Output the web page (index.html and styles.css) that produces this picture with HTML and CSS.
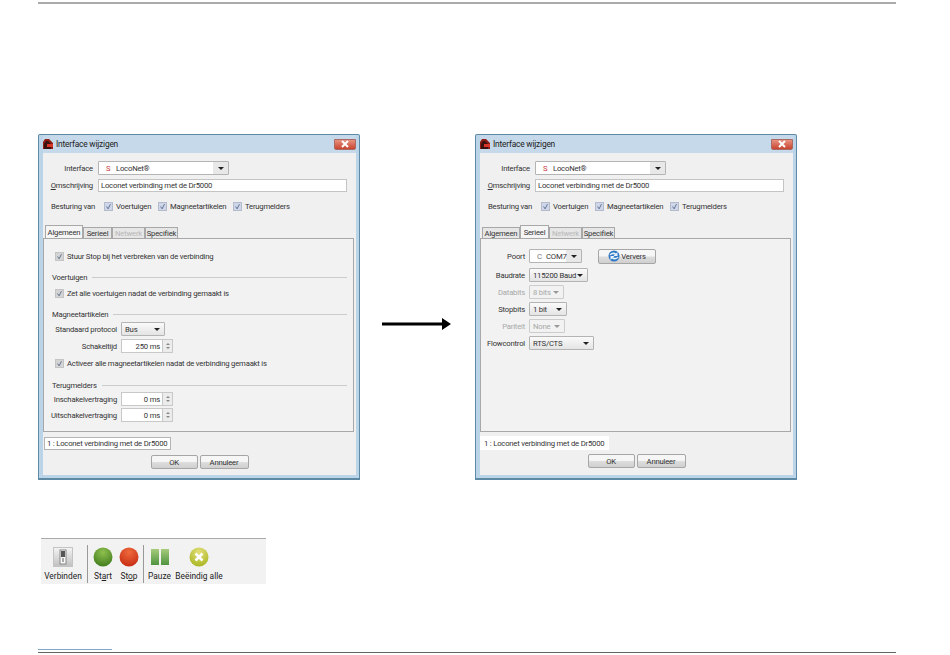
FILE: index.html
```html
<!DOCTYPE html>
<html lang="nl">
<head>
    <meta charset="UTF-8">
    <title>Interface wijzigen</title>
    <link rel="stylesheet" href="styles.css">
</head>
<body>
    <svg class="defs" width="0" height="0">
        <symbol id="loco" viewBox="0 0 12 12">
            <path d="M1 11V4l2-3h4l4 4v6z" fill="#8f1d14"/>
            <path d="M2 11V6l2-3h2l3 3v5z" fill="#3a1210"/>
            <path d="M5 6h6v3H5z" fill="#d8362a"/>
        </symbol>
        <symbol id="x" viewBox="0 0 10 8">
            <path d="M2 1l6 6M8 1L2 7" stroke="#fff" stroke-width="2"/>
        </symbol>
        <symbol id="check" viewBox="0 0 9 9">
            <path d="M2 4.500l2 3 3-6" fill="none" stroke="#5b6f8c" stroke-width="1.200"/>
        </symbol>
    </svg>

    <div class="page">
        <div class="rule-top"></div>

        <div class="dialogs">
            <div class="dialog">
                <div class="titlebar">
                    <svg class="app-icon"><use href="#loco"/></svg>
                    <span class="title">Interface wijzigen</span>
                    <span class="close"><svg class="close-x"><use href="#x"/></svg></span>
                </div>
                <div class="body">
                    <div class="top-row">
                        <label class="top-label">Interface</label>
                        <div class="combo combo-interface"><span class="mark">S</span><span>LocoNet®</span><i class="caret"></i></div>
                    </div>
                    <div class="top-row top-row-desc">
                        <label class="top-label"><u>O</u>mschrijving</label>
                        <div class="textfield">Loconet verbinding met de Dr5000</div>
                    </div>
                    <div class="control-row">
                        <span class="control-label">Besturing van</span>
                        <span class="check check-blue"><svg><use href="#check"/></svg>Voertuigen</span>
                        <span class="check check-blue"><svg><use href="#check"/></svg>Magneetartikelen</span>
                        <span class="check check-blue"><svg><use href="#check"/></svg>Terugmelders</span>
                    </div>
                    <div class="tabs">
                        <span class="tab tab-1 active">Algemeen</span>
                        <span class="tab tab-2">Serieel</span>
                        <span class="tab tab-3 disabled">Netwerk</span>
                        <span class="tab tab-4">Specifiek</span>
                    </div>
                    <div class="panel panel-general">
                        <span class="check check-grey first"><svg><use href="#check"/></svg>Stuur Stop bij het verbreken van de verbinding</span>
                        <div class="section section-1"><span>Voertuigen</span><hr></div>
                        <span class="check check-grey"><svg><use href="#check"/></svg>Zet alle voertuigen nadat de verbinding gemaakt is</span>
                        <div class="section section-2"><span>Magneetartikelen</span><hr></div>
                        <div class="form-row">
                            <label>Standaard protocol</label>
                            <div class="combo combo-bus">Bus<i class="caret"></i></div>
                        </div>
                        <div class="form-row">
                            <label>Schakeltijd</label>
                            <div class="spinner">250 ms<span class="spin-btns"><i class="up"></i><i class="down"></i></span></div>
                        </div>
                        <span class="check check-grey activate"><svg><use href="#check"/></svg>Activeer alle magneetartikelen nadat de verbinding gemaakt is</span>
                        <div class="section section-3"><span>Terugmelders</span><hr></div>
                        <div class="form-row">
                            <label>Inschakelvertraging</label>
                            <div class="spinner">0 ms<span class="spin-btns"><i class="up"></i><i class="down"></i></span></div>
                        </div>
                        <div class="form-row form-row-wide">
                            <label>Uitschakelvertraging</label>
                            <div class="spinner">0 ms<span class="spin-btns"><i class="up"></i><i class="down"></i></span></div>
                        </div>
                    </div>
                    <div class="status-tab boxed">1 : Loconet verbinding met de Dr5000</div>
                    <div class="buttons">
                        <button class="btn btn-ok">OK</button>
                        <button class="btn btn-cancel">Annuleer</button>
                    </div>
                </div>
            </div>

            <div class="arrow">
                <svg width="69" height="12" viewBox="0 0 69 12"><path d="M0 4.500h60V0l9 6-9 6V7.500H0z" fill="#000"/></svg>
            </div>

            <div class="dialog">
                <div class="titlebar">
                    <svg class="app-icon"><use href="#loco"/></svg>
                    <span class="title">Interface wijzigen</span>
                    <span class="close"><svg class="close-x"><use href="#x"/></svg></span>
                </div>
                <div class="body">
                    <div class="top-row">
                        <label class="top-label">Interface</label>
                        <div class="combo combo-interface"><span class="mark">S</span><span>LocoNet®</span><i class="caret"></i></div>
                    </div>
                    <div class="top-row top-row-desc">
                        <label class="top-label"><u>O</u>mschrijving</label>
                        <div class="textfield">Loconet verbinding met de Dr5000</div>
                    </div>
                    <div class="control-row">
                        <span class="control-label">Besturing van</span>
                        <span class="check check-blue"><svg><use href="#check"/></svg>Voertuigen</span>
                        <span class="check check-blue"><svg><use href="#check"/></svg>Magneetartikelen</span>
                        <span class="check check-blue"><svg><use href="#check"/></svg>Terugmelders</span>
                    </div>
                    <div class="tabs">
                        <span class="tab tab-1">Algemeen</span>
                        <span class="tab tab-2 active">Serieel</span>
                        <span class="tab tab-3 disabled">Netwerk</span>
                        <span class="tab tab-4">Specifiek</span>
                    </div>
                    <div class="panel panel-serial">
                        <div class="serial-row serial-port">
                            <label>Poort</label>
                            <div class="combo combo-port"><span class="mark-grey">C</span><span>COM7</span><i class="caret"></i></div>
                            <button class="btn btn-refresh">
                                <svg width="12" height="12" viewBox="0 0 12 12">
                                    <circle cx="6" cy="6" r="5.500" fill="#2f78c4"/>
                                    <path d="M1.500 5C2.500 2.500 6 1.800 8 3.500L9.500 2v4H5.500l1.300-1.400C5.300 3.800 3.500 4 2.600 5.300zM10.500 7C9.500 9.500 6 10.200 4 8.500L2.500 10V6h4L5.200 7.400c1.500.8 3.300.6 4.200-.7z" fill="#e8f2fb"/>
                                </svg>
                                Ververs
                            </button>
                        </div>
                        <div class="serial-row">
                            <label>Baudrate</label>
                            <div class="combo combo-baud">115200 Baud<i class="caret"></i></div>
                        </div>
                        <div class="serial-row off">
                            <label>Databits</label>
                            <div class="combo combo-data">8 bits<i class="caret"></i></div>
                        </div>
                        <div class="serial-row">
                            <label>Stopbits</label>
                            <div class="combo combo-stop">1 bit<i class="caret"></i></div>
                        </div>
                        <div class="serial-row off">
                            <label>Pariteit</label>
                            <div class="combo combo-parity">None<i class="caret"></i></div>
                        </div>
                        <div class="serial-row">
                            <label>Flowcontrol</label>
                            <div class="combo combo-flow">RTS/CTS<i class="caret"></i></div>
                        </div>
                    </div>
                    <div class="status-tab">1 : Loconet verbinding met de Dr5000</div>
                    <div class="buttons">
                        <button class="btn btn-ok">OK</button>
                        <button class="btn btn-cancel">Annuleer</button>
                    </div>
                </div>
            </div>
        </div>

        <div class="toolbar">
            <div class="tool tool-connect">
                <svg width="20" height="20" viewBox="0 0 20 20">
                    <defs>
                        <linearGradient id="sw" x1="0" y1="0" x2="0" y2="1">
                            <stop offset="0" stop-color="#f4f4f4"/>
                            <stop offset="1" stop-color="#c0c0c0"/>
                        </linearGradient>
                    </defs>
                    <rect x="0.500" y="0.500" width="19" height="19" fill="url(#sw)" stroke="#c4c4c4"/>
                    <rect x="7" y="3" width="6" height="14" fill="#f8f8f8" stroke="#888"/>
                    <rect x="8" y="4" width="4" height="6" fill="#555"/>
                    <rect x="9" y="11" width="2" height="4" fill="#aaa"/>
                </svg>
                <span>Verbinden</span>
            </div>
            <div class="tool-sep"></div>
            <div class="tool tool-start">
                <svg width="20" height="20" viewBox="0 0 20 20">
                    <defs>
                        <radialGradient id="green" cx="0.500" cy="0.250" r="0.800">
                            <stop offset="0" stop-color="#8fc04f"/>
                            <stop offset="1" stop-color="#3e7a1c"/>
                        </radialGradient>
                    </defs>
                    <circle cx="10" cy="10" r="9.500" fill="url(#green)"/>
                </svg>
                <span>St<u>a</u>rt</span>
            </div>
            <div class="tool tool-stop">
                <svg width="20" height="20" viewBox="0 0 20 20">
                    <defs>
                        <radialGradient id="red" cx="0.500" cy="0.250" r="0.800">
                            <stop offset="0" stop-color="#ee6a3c"/>
                            <stop offset="1" stop-color="#c62a12"/>
                        </radialGradient>
                    </defs>
                    <circle cx="10" cy="10" r="9.500" fill="url(#red)"/>
                </svg>
                <span>St<u>o</u>p</span>
            </div>
            <div class="tool-sep tool-sep-2"></div>
            <div class="tool tool-pause">
                <svg width="18" height="20" viewBox="0 0 18 20">
                    <defs>
                        <linearGradient id="bar" x1="0" y1="0" x2="0" y2="1">
                            <stop offset="0" stop-color="#a6cc7c"/>
                            <stop offset="1" stop-color="#4f9440"/>
                        </linearGradient>
                    </defs>
                    <rect x="0" y="2" width="8" height="16" fill="url(#bar)"/>
                    <rect x="10" y="2" width="8" height="16" fill="url(#bar)"/>
                </svg>
                <span>Pauze</span>
            </div>
            <div class="tool tool-end">
                <svg width="20" height="20" viewBox="0 0 20 20">
                    <defs>
                        <radialGradient id="lime" cx="0.500" cy="0.250" r="0.800">
                            <stop offset="0" stop-color="#e4e07a"/>
                            <stop offset="1" stop-color="#a6b41e"/>
                        </radialGradient>
                    </defs>
                    <circle cx="10" cy="10" r="9.500" fill="url(#lime)"/>
                    <path d="M6.500 6.500l7 7M13.500 6.500l-7 7" stroke="#fff" stroke-width="2.600"/>
                </svg>
                <span>Beëindig alle</span>
            </div>
        </div>

        <div class="footer">
            <div class="rule-blue"></div>
            <div class="rule-bottom"></div>
        </div>
    </div>
</body>
</html>
```

FILE: styles.css
```css
* {
    box-sizing: border-box;
}
body {
    margin: 0;
    background-color: #fff;
    font-family: Roboto, 'Liberation Sans', sans-serif;
    font-size: 7.7px;
    letter-spacing: -0.2px;
    color: #333;
    white-space: nowrap;
}
.defs {
    position: absolute;
}
.page {
    display: flex;
    flex-direction: column;
    height: 655px;
    padding-left: 38px;
}
.rule-top {
    width: 858px;
    height: 2px;
    margin-top: 2px;
    background-color: #aaa;
}
.dialogs {
    display: flex;
    margin: 130px 0 0;
}

/* dialog window */
.dialog {
    display: flex;
    flex-direction: column;
    width: 322px;
    height: 346px;
    padding: 0 3px 3px 4px;
    background-color: #bcd4e8;
    border: 1px solid #5f8aa5;
    border-bottom-width: 2px;
    border-radius: 2px 2px 0 0;
}
.titlebar {
    display: flex;
    align-items: center;
    flex-shrink: 0;
    height: 18px;
    background-color: #c5d9ea;
}
.app-icon {
    width: 12px;
    height: 12px;
    margin-right: 2px;
    margin-left: -1px;
}
.title {
    font-size: 8.4px;
    color: #222;
}
.close {
    display: flex;
    align-items: center;
    justify-content: center;
    width: 22px;
    height: 11px;
    margin-left: auto;
    background: linear-gradient(#e8917f, #c8442f);
    border: 1px solid #a86a62;
    border-radius: 0 0 2px 2px;
}
.close-x {
    width: 10px;
    height: 8px;
}
.body {
    flex: 1;
    padding-top: 8px;
    background-color: #f0f0f0;
}

/* top form */
.top-row {
    display: flex;
    align-items: center;
    height: 14px;
}
.top-row-desc {
    height: 13px;
    margin-top: 4px;
}
.top-label {
    width: 50px;
    margin-right: 5px;
    text-align: right;
}
.combo {
    position: relative;
    display: flex;
    align-items: center;
    height: 14px;
    padding-left: 3px;
    background: linear-gradient(#fafafa, #e4e4e4);
    border: 1px solid #b4b4b4;
    border-radius: 1px;
}
.caret {
    position: absolute;
    top: 5px;
    right: 4px;
    border: 3px solid transparent;
    border-top: 3px solid #222;
    border-bottom: 0;
}
.combo-interface {
    width: 131px;
    padding-left: 7px;
    background: linear-gradient(90deg, #fff 88%, #e8e8e8 88%);
}
.mark {
    width: 10px;
    color: #c8343a;
}
.textfield {
    display: flex;
    align-items: center;
    width: 249px;
    height: 13px;
    padding-left: 2px;
    background-color: #fff;
    border: 1px solid #c4c4c4;
}
.control-row {
    display: flex;
    align-items: center;
    height: 10px;
    margin-top: 9px;
    padding-left: 8px;
}
.control-label {
    width: 53px;
}
.check {
    display: flex;
    align-items: center;
    height: 10px;
}
.check svg {
    width: 9px;
    height: 9px;
    margin-right: 3px;
    border: 1px solid #b4bccb;
}
.check-blue svg {
    background-color: #cfd6ea;
}
.check-grey svg {
    background-color: #d4d4d4;
    border-color: #c4c4c4;
}
.check-blue:nth-child(2) {
    width: 54px;
}
.check-blue:nth-child(3) {
    width: 75px;
}

/* tabs */
.tabs {
    display: flex;
    align-items: flex-end;
    height: 12px;
    margin: 15px 0 0 2px;
}
.tab {
    display: flex;
    align-items: center;
    justify-content: center;
    height: 11px;
    background-color: #e6e6e6;
    border: 1px solid #a8a8a8;
    border-bottom: 0;
}
.tab-1 {
    width: 38px;
}
.tab-2 {
    width: 29px;
}
.tab-3 {
    width: 33px;
}
.tab-4 {
    width: 33px;
}
.tab.active {
    height: 13px;
    background-color: #f5f5f5;
}
.tab.disabled {
    color: #b8b8b8;
}
.panel {
    display: flex;
    flex-direction: column;
    align-items: flex-start;
    width: 311px;
    height: 194px;
    background-color: #f2f2f2;
    border: 1px solid #a8a8a8;
}
.panel-general {
    padding: 12px 0 0 11px;
}
.panel-serial {
    padding-top: 10px;
}
.section {
    display: flex;
    align-items: center;
    width: 295px;
    margin-left: -3px;
    height: 10px;
}
.section hr {
    flex: 1;
    height: 1px;
    margin: 0 0 0 5px;
    background-color: #ccc;
    border: 0;
}
.section-1 {
    margin-top: 11px;
}
.section-1 + .check {
    margin-top: 6px;
}
.section-2 {
    margin-top: 11px;
}
.section-3 {
    margin-top: 12px;
}
.form-row {
    display: flex;
    align-items: center;
    height: 14px;
    margin: 3px 0 0 -11px;
}
.section-3 + .form-row {
    margin-top: 2px;
}
.form-row label {
    width: 73px;
    margin-right: 4px;
    text-align: right;
}
.form-row-wide {
    margin-top: 2px;
}
.combo-bus {
    width: 44px;
}
.spinner {
    position: relative;
    display: flex;
    align-items: center;
    justify-content: flex-end;
    width: 52px;
    height: 14px;
    padding-right: 12px;
    background-color: #fff;
    border: 1px solid #c8c8c8;
}
.spin-btns {
    position: absolute;
    top: 0;
    right: 0;
    display: flex;
    flex-direction: column;
    width: 10px;
    height: 12px;
    background-color: #ececec;
    border-left: 1px solid #c8c8c8;
}
.spin-btns i {
    flex: 1;
    margin: 1px auto;
    width: 0;
    border: 2px solid transparent;
}
.spin-btns .up {
    border-top: 0;
    border-bottom: 2px solid #888;
}
.spin-btns .down {
    border-bottom: 0;
    border-top: 2px solid #888;
}
.activate {
    margin-top: 5px;
}

/* serial tab */
.serial-row {
    display: flex;
    align-items: center;
    height: 14px;
    margin-bottom: 3px;
}
.serial-port {
    margin-bottom: 5px;
}
.serial-row label {
    width: 44px;
    margin-right: 4px;
    text-align: right;
}
.serial-row.off {
    color: #a8a8a8;
}
.serial-row.off .combo {
    background: #f2f2f2;
    border-color: #ccc;
}
.serial-row.off .caret {
    border-top-color: #999;
}
.combo-port {
    width: 53px;
    padding-left: 7px;
    background: linear-gradient(90deg, #fff 70%, #e8e8e8 70%);
}
.mark-grey {
    width: 9px;
    color: #777;
}
.combo-baud {
    width: 59px;
}
.combo-data {
    width: 35px;
}
.combo-stop {
    width: 38px;
}
.combo-parity {
    width: 36px;
}
.combo-flow {
    width: 65px;
}

/* bottom of the dialog */
.status-tab {
    display: flex;
    align-items: center;
    width: 129px;
    height: 14px;
    margin-top: 4px;
    padding-left: 4px;
    background-color: #fff;
}
.status-tab.boxed {
    width: 127px;
    height: 13px;
    margin-top: 5px;
    margin-left: 1px;
    padding-left: 2px;
    border: 1px solid #b4b4b4;
}
.buttons {
    display: flex;
    justify-content: center;
    gap: 2px;
    margin-top: 4px;
}
.status-tab.boxed + .buttons {
    margin-top: 5px;
}
.btn {
    display: flex;
    align-items: center;
    justify-content: center;
    height: 14px;
    padding: 0;
    font: inherit;
    letter-spacing: inherit;
    color: #333;
    background: linear-gradient(#f6f6f6 45%, #dcdcdc 55%, #d0d0d0);
    border: 1px solid #a6a6a6;
    border-radius: 2px;
}
.btn-ok {
    width: 47px;
}
.btn-cancel {
    width: 49px;
}
.btn-refresh {
    width: 58px;
    height: 15px;
    margin-left: 16px;
    gap: 1px;
}

.arrow {
    display: flex;
    align-items: center;
    width: 115px;
    height: 12px;
    margin-top: 184px;
    padding-left: 22px;
}

/* toolbar */
.toolbar {
    display: flex;
    width: 225px;
    height: 46px;
    margin: 58px 0 0 3px;
    padding-top: 6px;
    background-color: #f2f2f2;
    border-top: 1px solid #aaa;
    font-size: 8.4px;
    letter-spacing: 0;
    color: #222;
}
.tool {
    display: flex;
    flex-direction: column;
    align-items: center;
    justify-content: space-between;
    height: 36px;
    padding-top: 2px;
}
.tool-connect {
    width: 38px;
    margin: 0 5px 0 3px;
}
.tool-sep {
    width: 1px;
    height: 38px;
    background-color: #999;
}
.tool-start {
    width: 20px;
    margin: 0 6px 0 5px;
}
.tool-stop {
    width: 20px;
    margin-right: 4px;
}
.tool-sep-2 {
    margin-right: 4px;
}
.tool-pause {
    width: 23px;
    margin-right: 5px;
}
.tool-end {
    width: 46px;
}

.footer {
    margin-top: auto;
    margin-bottom: 2px;
}
.rule-blue {
    width: 74px;
    height: 1px;
    background-color: #7ba7c4;
}
.rule-bottom {
    width: 858px;
    height: 1px;
    margin-top: 2px;
    background-color: #666;
}
```
